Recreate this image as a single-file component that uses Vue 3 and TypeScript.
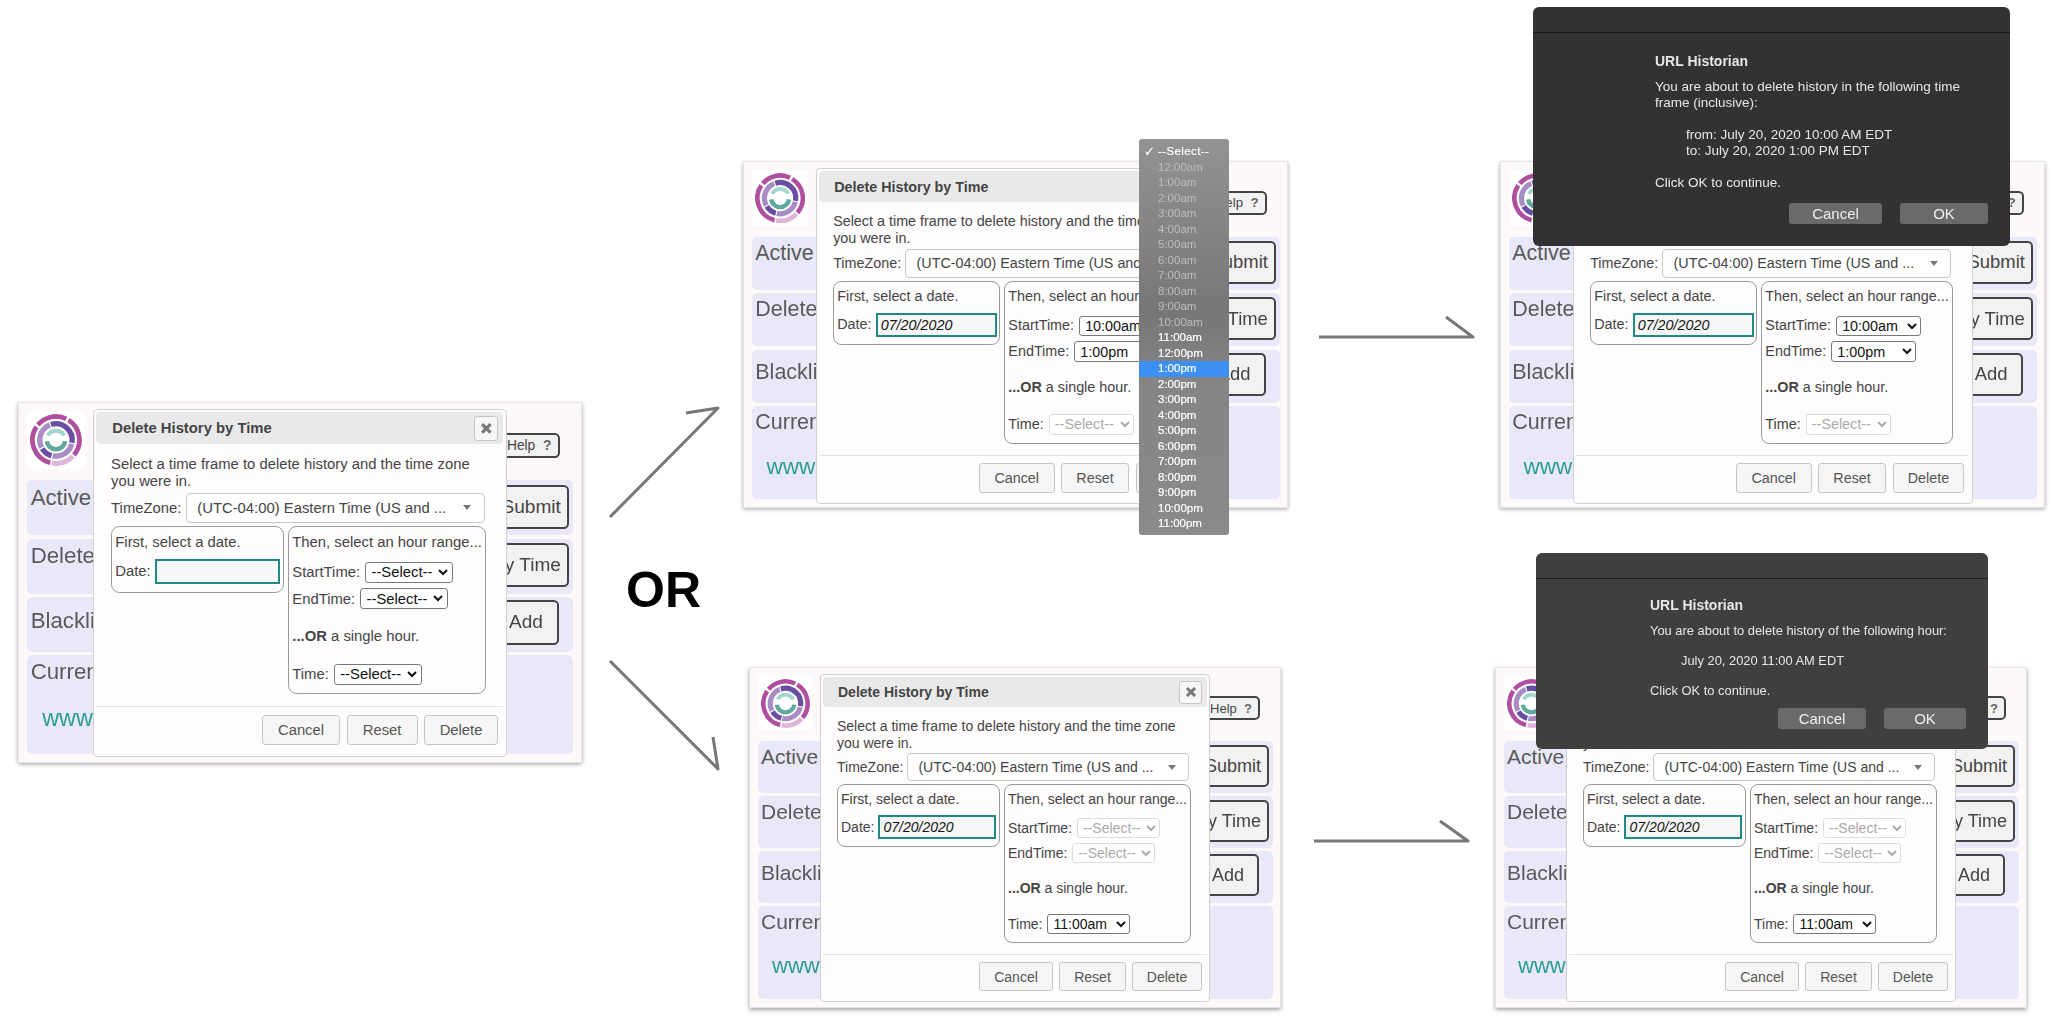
<script setup lang="ts">
interface Panel {
	id: string;
	left: number;
	top: number;
	scale: number;
	height: number;
	date: string;
	start: string;
	end: string;
	single: string;
	rangeOff: boolean;
	singleOff: boolean;
}

const NONE = "--Select--";

const panels: Panel[] = [
	{ id: "first", left: 18, top: 402, scale: 1.06, height: 341, date: "", start: NONE, end: NONE, single: NONE, rangeOff: false, singleOff: false },
	{ id: "range", left: 743, top: 161, scale: 1.025, height: 339, date: "07/20/2020", start: "10:00am", end: "1:00pm", single: NONE, rangeOff: false, singleOff: true },
	{ id: "rangeDone", left: 1500, top: 161, scale: 1.025, height: 339, date: "07/20/2020", start: "10:00am", end: "1:00pm", single: NONE, rangeOff: false, singleOff: true },
	{ id: "hour", left: 749, top: 667, scale: 1, height: 341, date: "07/20/2020", start: NONE, end: NONE, single: "11:00am", rangeOff: true, singleOff: false },
	{ id: "hourDone", left: 1495, top: 667, scale: 1, height: 341, date: "07/20/2020", start: NONE, end: NONE, single: "11:00am", rangeOff: true, singleOff: false },
];

const hours = [12, 1, 2, 3, 4, 5, 6, 7, 8, 9, 10, 11];
const menu = [
	...hours.map((h, i) => ({ label: `${h}:00am`, off: i < 11, picked: false })),
	...hours.map((h, i) => ({ label: `${h}:00pm`, off: false, picked: i === 1 })),
];

// css zoom also scales left/top, so those get divided back
function panelStyle(p: Panel) {
	return {
		left: `${p.left / p.scale}px`,
		top: `${p.top / p.scale}px`,
		height: `${p.height}px`,
		zoom: p.scale,
	};
}

// ring segment, angles in degrees clockwise from 12 o'clock
function arc(r: number, from: number, to: number) {
	const pt = (a: number) => {
		const t = ((a - 90) * Math.PI) / 180;
		return `${(25 + r * Math.cos(t)).toFixed(2)} ${(25 + r * Math.sin(t)).toFixed(2)}`;
	};
	return `M${pt(from)}A${r} ${r} 0 ${to - from > 180 ? 1 : 0} 1 ${pt(to)}`;
}

const rings = [
	{ d: arc(22.6, -50, 26), c: "#b04fa0", w: 4.6 },
	{ d: arc(22.6, 32, 130), c: "#b04fa0", w: 4.6 },
	{ d: arc(22.6, 134, 190), c: "#e0b3da", w: 4.6 },
	{ d: arc(22.6, 194, 304), c: "#b04fa0", w: 4.6 },
	{ d: arc(15.6, -18, 100), c: "#6a4ea3", w: 5.2 },
	{ d: arc(15.6, 104, 192), c: "#a98cc4", w: 5.2 },
	{ d: arc(15.6, 196, 238), c: "#6a4ea3", w: 5.2 },
	{ d: arc(15.6, 242, 338), c: "#a98cc4", w: 5.2 },
	{ d: arc(9, -62, 62), c: "#a6d6d0", w: 4 },
	{ d: arc(9, 98, 262), c: "#5fa9a0", w: 4.4 },
];
</script>

<template>
	<div class="page">
		<div
			v-for="p in panels"
			:key="p.id"
			class="panel"
			:style="panelStyle(p)">
			<div class="head">
				<div class="logo">
					<svg viewBox="0 0 50 50" width="49" height="49">
						<path
							v-for="(r, i) in rings"
							:key="i"
							:d="r.d"
							:stroke="r.c"
							:stroke-width="r.w"
							fill="none" />
					</svg>
				</div>
				<button class="help" type="button">Help&nbsp;&nbsp;<b>?</b></button>
			</div>
			<div class="row">
				<span class="label">Active</span>
				<button class="act" type="button">Submit</button>
			</div>
			<div class="row">
				<span class="label">Delete</span>
				<button class="act" type="button">by Time</button>
			</div>
			<div class="row">
				<span class="label low">Blacklist</span>
				<button class="act add" type="button">Add</button>
			</div>
			<div class="row last">
				<span class="label">Current</span>
				<a class="url">www.example.com</a>
			</div>

			<div class="dialog">
				<div class="title">
					<span>Delete History by Time</span>
					<button class="close" type="button">
						<svg viewBox="0 0 12 12" width="12" height="12">
							<path d="M2 2L10 10M10 2L2 10" stroke="#777" stroke-width="3" fill="none" />
						</svg>
					</button>
				</div>
				<div class="body">
					<p class="intro">Select a time frame to delete history and the time zone you were in.</p>
					<div class="tz-row">
						<span>TimeZone:</span>
						<div class="tz">
							<span>(UTC-04:00) Eastern Time (US and ...</span>
							<i class="tri"></i>
						</div>
					</div>
					<div class="boxes">
						<div class="box left">
							<div>First, select a date.</div>
							<div class="line date-line">
								<span>Date:</span>
								<input class="date" type="text" :value="p.date" />
							</div>
						</div>
						<div class="box right">
							<div>Then, select an hour range...</div>
							<div class="line start">
								<span>StartTime:</span>
								<select :disabled="p.rangeOff"><option>{{ p.start }}</option></select>
							</div>
							<div class="line end">
								<span>EndTime:</span>
								<select :disabled="p.rangeOff"><option>{{ p.end }}</option></select>
							</div>
							<div class="or"><b>...OR</b> a single hour.</div>
							<div class="line one">
								<span>Time:</span>
								<select :disabled="p.singleOff"><option>{{ p.single }}</option></select>
							</div>
						</div>
					</div>
				</div>
				<div class="foot">
					<button class="cancel" type="button">Cancel</button>
					<button class="reset" type="button">Reset</button>
					<button class="del" type="button">Delete</button>
				</div>
			</div>
		</div>

		<ul class="menu">
			<li class="chosen"><span class="tick">✓</span>--Select--</li>
			<li
				v-for="m in menu"
				:key="m.label"
				:class="{ off: m.off, picked: m.picked }">
				{{ m.label }}
			</li>
		</ul>

		<div class="alert range-alert">
			<div class="alert-top"></div>
			<div class="alert-body">
				<h4>URL Historian</h4>
				<p>You are about to delete history in the following time<br />frame (inclusive):</p>
				<p class="indent">from: July 20, 2020 10:00 AM EDT<br />to: July 20, 2020 1:00 PM EDT</p>
				<p>Click OK to continue.</p>
			</div>
			<div class="alert-btns">
				<button type="button">Cancel</button>
				<button type="button">OK</button>
			</div>
		</div>

		<div class="alert hour-alert">
			<div class="alert-top"></div>
			<div class="alert-body">
				<h4>URL Historian</h4>
				<p>You are about to delete history of the following hour:</p>
				<p class="indent">July 20, 2020 11:00 AM EDT</p>
				<p>Click OK to continue.</p>
			</div>
			<div class="alert-btns">
				<button type="button">Cancel</button>
				<button type="button">OK</button>
			</div>
		</div>

		<div class="or-big">OR</div>

		<svg class="arrows" width="2055" height="1026">
			<g stroke="#777" stroke-width="3" stroke-linejoin="round" fill="none">
				<path d="M610 517L718 408L686 413" />
				<path d="M610 661L718 769L713 737" />
				<path d="M1319 337H1473L1446 317" />
				<path d="M1314 841H1468L1440 821" />
			</g>
		</svg>
	</div>
</template>

<style scoped>
.page {
	position: relative;
	width: 2055px;
	height: 1026px;
	overflow: hidden;
	background: #fff;
	font-family: "Liberation Sans", Arial, sans-serif;
	color: #444;
}
.panel {
	position: absolute;
	width: 532px;
	box-sizing: border-box;
	display: flex;
	flex-direction: column;
	gap: 3px;
	padding: 8px 7px 8px 8px;
	background: #fdf9f9;
	border: 1px solid #e6e4e4;
	box-shadow: 0 2px 4px rgba(0, 0, 0, 0.35);
	filter: blur(0.35px);
}
.head {
	height: 62px;
	flex: none;
	display: flex;
	justify-content: space-between;
	align-items: flex-start;
}
.logo {
	width: 54px;
	height: 54px;
	display: flex;
	align-items: center;
	justify-content: center;
	background: #fff;
}
.help {
	margin: 20px 13px 0 0;
	height: 24px;
	padding: 0 6px 0 8px;
	font: 13px "Liberation Sans", Arial, sans-serif;
	color: #444;
	background: #f3f2f2;
	border: 2px solid #444;
	border-radius: 5px;
}
.help b {
	color: #666;
}
.row {
	height: 52px;
	flex: none;
	display: flex;
	justify-content: space-between;
	align-items: flex-start;
	padding-left: 3px;
	background: #e9e8f8;
	border-radius: 5px;
	position: relative;
}
.row.last {
	flex: 1;
}
.label {
	font-size: 21px;
	line-height: 24px;
	padding-top: 4px;
	color: #5a5a5a;
}
.label.low {
	padding-top: 10px;
}
.act {
	margin: 4px 4px 0 0;
	height: 42px;
	padding: 0 6px;
	font: 18px "Liberation Sans", Arial, sans-serif;
	color: #444;
	background: #f3f2f2;
	border: 2px solid #444;
	border-radius: 5px;
}
.act.add {
	margin: 3px 14px 0 0;
	padding-right: 13px;
}
.url {
	position: absolute;
	left: 14px;
	top: 47px;
	font-size: 22px;
	color: #2a9d95;
}
.dialog {
	position: absolute;
	left: 70px;
	top: 6px;
	width: 390px;
	height: 328px;
	box-sizing: border-box;
	padding: 2px;
	background: #fffcfd;
	border: 1px solid #d0d0d0;
	border-radius: 4px;
	display: flex;
	flex-direction: column;
	font-size: 14px;
}
.title {
	height: 30px;
	flex: none;
	display: flex;
	align-items: center;
	justify-content: space-between;
	padding: 0 5px 0 15px;
	background: #e9e9e9;
	border-radius: 4px;
	font-weight: bold;
}
.close {
	width: 23px;
	height: 23px;
	padding: 0;
	display: flex;
	align-items: center;
	justify-content: center;
	background: #f6f6f6;
	border: 1px solid #c5c5c5;
	border-radius: 3px;
}
.body {
	padding: 11px 0 0 14px;
}
.intro {
	margin: 0;
	line-height: 16.5px;
	width: 350px;
}
.tz-row {
	display: flex;
	align-items: center;
	gap: 4px;
	margin-top: 2px;
}
.tz {
	width: 282px;
	height: 28px;
	box-sizing: border-box;
	display: flex;
	align-items: center;
	justify-content: space-between;
	padding: 0 12px 0 10px;
	background: #fff;
	border: 1px solid #c8c8c8;
	border-radius: 4px;
}
.tri {
	width: 0;
	height: 0;
	border-left: 4px solid transparent;
	border-right: 4px solid transparent;
	border-top: 5px solid #777;
}
.boxes {
	display: flex;
	align-items: flex-start;
	gap: 4px;
	margin-top: 3px;
}
.box {
	box-sizing: border-box;
	border: 1px solid #999;
	border-radius: 8px;
	padding: 6px 3px 0;
	line-height: 17px;
	white-space: nowrap;
}
.box.left {
	width: 163px;
	height: 63px;
}
.box.right {
	width: 187px;
	height: 159px;
}
.line {
	display: flex;
	align-items: center;
	gap: 5px;
}
.date-line {
	margin-top: 7px;
	gap: 4px;
}
.date {
	width: 118px;
	height: 24px;
	box-sizing: border-box;
	padding: 0 3px;
	font: italic 14px "Liberation Sans", Arial, sans-serif;
	color: #111;
	background: #f6f6f6;
	border: 2px solid #1f8a85;
	outline: none;
}
select {
	width: 83px;
	height: 20px;
	box-sizing: border-box;
	padding: 0 0 0 1px;
	font: 14px "Liberation Sans", Arial, sans-serif;
	color: #111;
	background: #fff;
	border: 1px solid #777;
	border-radius: 3px;
}
select:disabled {
	color: #aaa;
	border-color: #ddd;
	opacity: 1;
}
.start {
	margin-top: 10px;
}
.end {
	margin-top: 5px;
}
.or {
	margin-top: 17px;
}
.one {
	margin-top: 17px;
}
.foot {
	margin-top: auto;
	display: flex;
	justify-content: flex-end;
	gap: 6px;
	padding: 7px 5px 8px 0;
	border-top: 1px solid #e4e4e4;
}
.foot button {
	height: 29px;
	padding: 0;
	font: 14px "Liberation Sans", Arial, sans-serif;
	color: #555;
	background: #f6f6f6;
	border: 1px solid #c5c5c5;
	border-radius: 3px;
}
.foot .cancel {
	width: 74px;
}
.foot .reset {
	width: 67px;
}
.foot .del {
	width: 70px;
}
.menu {
	position: absolute;
	left: 1139px;
	top: 139px;
	width: 90px;
	height: 396px;
	box-sizing: border-box;
	margin: 0;
	padding: 5px 0 0;
	list-style: none;
	border-radius: 3px;
	background: linear-gradient(#939393 0%, #767676 44%, #858585 60%, #8a8a8a 100%);
	font-size: 11.5px;
	font-weight: 500;
	color: #fff;
	filter: blur(0.3px);
}
.menu li {
	height: 15.5px;
	line-height: 15.5px;
	padding-left: 19px;
	position: relative;
	-webkit-text-stroke: 0.2px #fff;
}
.menu li.chosen {
	letter-spacing: 0.4px;
}
.menu li.off {
	color: #bdbdbd;
	-webkit-text-stroke: 0;
}
.menu li.picked {
	background: #3b8ff5;
}
.tick {
	position: absolute;
	left: 5px;
	font-family: "DejaVu Sans", sans-serif;
	font-size: 13px;
}
.alert {
	position: absolute;
	box-sizing: border-box;
	border-radius: 6px;
	color: #e6e6e6;
	line-height: 16px;
	filter: blur(0.3px);
}
.range-alert {
	left: 1533px;
	top: 7px;
	width: 477px;
	height: 239px;
	background: #323232;
	font-size: 13.5px;
}
.hour-alert {
	left: 1536px;
	top: 553px;
	width: 452px;
	height: 196px;
	background: #3f3f3d;
	font-size: 12.9px;
}
.alert-top {
	height: 25px;
	border-bottom: 1px solid #1a1a1a;
}
.range-alert .alert-body {
	padding: 19px 0 0 122px;
}
.hour-alert .alert-body {
	padding: 17px 0 0 114px;
}
.alert h4 {
	margin: 0 0 9px;
	font-size: 14px;
	line-height: 18px;
	font-weight: bold;
}
.alert p {
	margin: 0 0 16px;
}
.hour-alert p {
	margin-bottom: 14px;
}
.alert .indent {
	padding-left: 31px;
}
.alert-btns {
	position: absolute;
	display: flex;
	gap: 18px;
}
.range-alert .alert-btns {
	right: 22px;
	top: 196px;
}
.hour-alert .alert-btns {
	right: 22px;
	top: 155px;
}
.alert-btns button {
	height: 21px;
	padding: 0;
	font: 15px "Liberation Sans", Arial, sans-serif;
	color: #eee;
	background: #6a6a6a;
	border: none;
	border-radius: 3px;
}
.range-alert button:first-child {
	width: 93px;
}
.range-alert button:last-child {
	width: 88px;
}
.hour-alert button:first-child {
	width: 88px;
}
.hour-alert button:last-child {
	width: 82px;
}
.or-big {
	position: absolute;
	left: 626px;
	top: 562px;
	font-size: 50px;
	font-weight: bold;
	color: #000;
	line-height: 57px;
}
.arrows {
	position: absolute;
	left: 0;
	top: 0;
	pointer-events: none;
}
</style>
